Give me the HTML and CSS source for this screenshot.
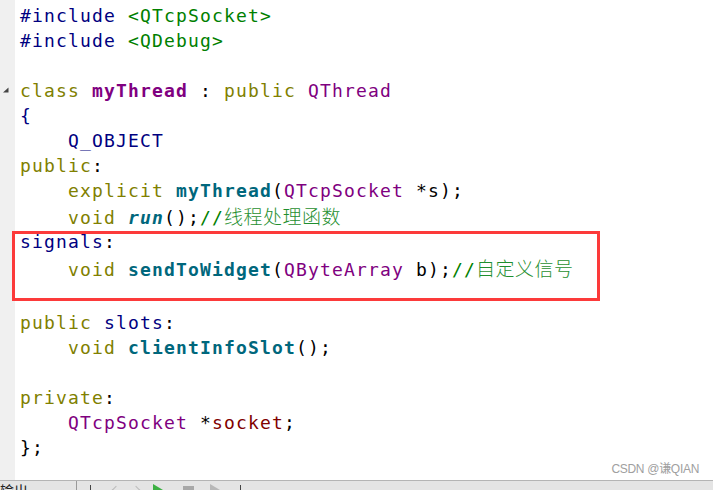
FILE: index.html
```html
<!DOCTYPE html>
<html lang="en">

<head>
    <meta charset="UTF-8">
    <meta name="viewport" content="width=device-width, initial-scale=1.0">
    <title>myThread.h</title>
    <link rel="stylesheet" href="styles.css">
</head>

<body>
    <div class="editor">
        <div class="gutter">
            <!-- 折叠标记 -->
            <svg class="fold" width="8" height="8" viewBox="0 0 8 8">
                <path d="M1 6.5 L6.5 1.5 L6.5 6.5 Z" fill="#444" />
            </svg>
        </div>
        <div class="code">
            <div class="line"><span class="pp">#include</span> <span class="inc">&lt;QTcpSocket&gt;</span></div>
            <div class="line"><span class="pp">#include</span> <span class="inc">&lt;QDebug&gt;</span></div>
            <div class="line"></div>
            <div class="line"><span class="kw">class</span> <span class="cls">myThread</span> : <span class="kw">public</span> <span class="type">QThread</span></div>
            <div class="line"><span class="pp">{</span></div>
            <div class="line">    <span class="pp">Q_OBJECT</span></div>
            <div class="line"><span class="kw">public</span>:</div>
            <div class="line">    <span class="kw">explicit</span> <span class="fn">myThread</span>(<span class="type">QTcpSocket</span> *s);</div>
            <div class="line">    <span class="kw">void</span> <span class="fn virt">run</span>();<span class="cmt">//<span class="cjk">线程处理函数</span></span></div>
            <div class="block">
                <div class="line"><span class="pp">signals</span>:</div>
                <div class="line">    <span class="kw">void</span> <span class="fn">sendToWidget</span>(<span class="type">QByteArray</span> b);<span class="cmt">//<span class="cjk">自定义信号</span></span></div>
                <div class="line"></div>
                <span class="mark"></span>
            </div>
            <div class="line"><span class="kw">public</span> <span class="pp">slots</span>:</div>
            <div class="line">    <span class="kw">void</span> <span class="fn">clientInfoSlot</span>();</div>
            <div class="line"></div>
            <div class="line"><span class="kw">private</span>:</div>
            <div class="line">    <span class="type">QTcpSocket</span> *<span class="var">socket</span>;</div>
            <div class="line">};</div>
        </div>
        <span class="watermark">CSDN @谦QIAN</span>
    </div>

    <div class="statusbar">
        <span class="tab-title">输出</span>
        <span class="sep"></span>
        <span class="tool bar"></span>
        <span class="tool arrow left"></span>
        <span class="tool arrow right"></span>
        <span class="tool play"></span>
        <span class="tool stop"></span>
        <span class="tool next"></span>
        <span class="tool bar"></span>
    </div>
</body>

</html>
```

FILE: styles.css
```css
* {
    box-sizing: border-box;
}

body {
    margin: 0;
    width: 713px;
    height: 490px;
    overflow: hidden;
    background: #fff;
}

.editor {
    display: flex;
    height: 480px;
    position: relative;
}

.gutter {
    width: 15px;
    flex-shrink: 0;
    background: #f0f0f0;
    position: relative;
}

.gutter .fold {
    position: absolute;
    left: 2px;
    top: 86px;
}

.code {
    padding: 3px 0 0 5px;
    font-family: "DejaVu Sans Mono", monospace;
    font-size: 18px;
    letter-spacing: 1.16px;
    color: #000;
    flex: 1;
}

.code .line {
    height: 25px;
    line-height: 25px;
    white-space: pre;
}

.block {
    position: relative;
    padding-bottom: 5px;
}

.block .line:first-child {
    line-height: 27px;
}

.block .line:nth-child(2) {
    height: 27px;
    line-height: 29px;
}

/* 红框标注 */
.block .mark {
    position: absolute;
    left: -8px;
    top: 3px;
    width: 588px;
    height: 70px;
    border: 3px solid #fc3a3a;
}

.pp {
    color: #000080;
}

.inc,
.cmt {
    color: #008000;
}

.kw {
    color: #808000;
}

.cls {
    color: #800080;
    font-weight: bold;
}

.type {
    color: #800080;
}

.fn {
    color: #00677c;
    font-weight: bold;
}

.fn.virt {
    font-style: italic;
}

.var {
    color: #800000;
}

.cjk {
    font-family: "Noto Sans CJK SC", sans-serif;
    font-size: 19px;
    font-weight: 300;
    letter-spacing: 0.5px;
    color: #1f8f2f;
}

.watermark {
    position: absolute;
    right: 14px;
    bottom: 4px;
    font-family: "Liberation Sans", "Noto Sans CJK SC", sans-serif;
    font-size: 12px;
    color: #a0a0a0;
    letter-spacing: -0.3px;
}

.statusbar {
    height: 10px;
    border-top: 1px solid #b4b4b4;
    background: #e4e4e4;
    display: flex;
    align-items: flex-start;
    overflow: hidden;
    font-family: "Noto Sans CJK SC", sans-serif;
    font-size: 14px;
    color: #222;
}

.tab-title {
    line-height: 14px;
    margin-top: 2px;
    width: 76px;
}

.sep {
    width: 1px;
    height: 10px;
    background: #999;
    margin-right: 11px;
}

.tool {
    width: 14px;
    height: 10px;
    margin-right: 8px;
    margin-top: 4px;
}

.tool.bar {
    width: 1px;
    background: #444;
    margin: 4px 22px 0 2px;
}

.tool.arrow {
    width: 6px;
    height: 6px;
    margin-top: 6px;
    border-left: 1px solid #bbb;
    border-top: 1px solid #bbb;
    margin-right: 14px;
}

.tool.arrow.left {
    transform: rotate(-45deg);
}

.tool.arrow.right {
    transform: rotate(135deg);
}

.tool.play {
    width: 0;
    height: 0;
    border-left: 10px solid #3cb043;
    border-top: 6px solid transparent;
    border-bottom: 6px solid transparent;
    margin-top: 3px;
    margin-right: 20px;
}

.tool.stop {
    width: 11px;
    background: #a8a8a8;
    margin-top: 5px;
    margin-right: 16px;
}

.tool.next {
    width: 0;
    height: 0;
    border-left: 10px solid #b8b8b8;
    border-top: 6px solid transparent;
    border-bottom: 6px solid transparent;
    margin-top: 3px;
    margin-right: 18px;
}
```
